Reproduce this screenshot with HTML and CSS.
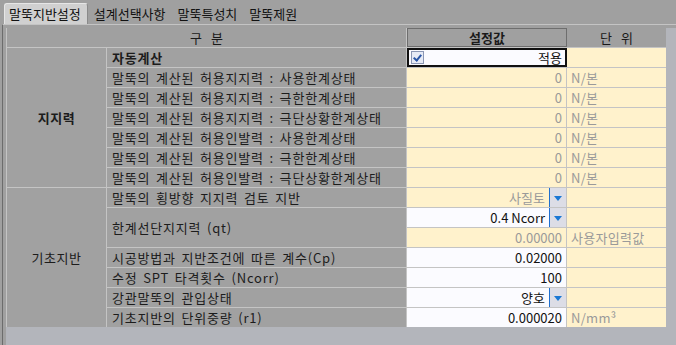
FILE: index.html
```html
<!DOCTYPE html>
<html>
<head>
    <meta charset="utf-8">
    <title>말뚝지반설정</title>
    <link rel="stylesheet" href="styles.css">
</head>
<body>
    <div class="tabs">
        <div class="tab active">말뚝지반설정</div>
        <div class="tab">설계선택사항</div>
        <div class="tab">말뚝특성치</div>
        <div class="tab">말뚝제원</div>
    </div>
    <div class="panel">
        <div class="sheet">
            <div class="grid">
                <div class="hd hd-name">구 분</div>
                <div class="hd hd-value">설정값</div>
                <div class="hd hd-unit">단 위</div>

                <div class="group bold span7">지지력</div>
                <div class="label bold">자동계산</div>
                <div class="val focus"><span class="check"></span><span>적용</span></div>
                <div class="unit"></div>

                <div class="label">말뚝의 계산된 허용지지력 : 사용한계상태</div>
                <div class="val dis">0</div>
                <div class="unit">N/본</div>
                <div class="label">말뚝의 계산된 허용지지력 : 극한한계상태</div>
                <div class="val dis">0</div>
                <div class="unit">N/본</div>
                <div class="label">말뚝의 계산된 허용지지력 : 극단상황한계상태</div>
                <div class="val dis">0</div>
                <div class="unit">N/본</div>
                <div class="label">말뚝의 계산된 허용인발력 : 사용한계상태</div>
                <div class="val dis">0</div>
                <div class="unit">N/본</div>
                <div class="label">말뚝의 계산된 허용인발력 : 극한한계상태</div>
                <div class="val dis">0</div>
                <div class="unit">N/본</div>
                <div class="label">말뚝의 계산된 허용인발력 : 극단상황한계상태</div>
                <div class="val dis">0</div>
                <div class="unit">N/본</div>

                <div class="group span7">기초지반</div>
                <div class="label">말뚝의 횡방향 지지력 검토 지반</div>
                <div class="val dis combo"><span>사질토</span><span class="drop"></span></div>
                <div class="unit"></div>
                <div class="label span2">한계선단지지력 (qt)</div>
                <div class="val combo"><span>0.4 Ncorr</span><span class="drop"></span></div>
                <div class="unit"></div>
                <div class="val dis">0.00000</div>
                <div class="unit">사용자입력값</div>
                <div class="label">시공방법과 지반조건에 따른 계수(Cp)</div>
                <div class="val">0.02000</div>
                <div class="unit"></div>
                <div class="label">수정 SPT 타격횟수 (Ncorr)</div>
                <div class="val">100</div>
                <div class="unit"></div>
                <div class="label">강관말뚝의 관입상태</div>
                <div class="val combo"><span>양호</span><span class="drop"></span></div>
                <div class="unit"></div>
                <div class="label">기초지반의 단위중량 (r1)</div>
                <div class="val">0.000020</div>
                <div class="unit">N/mm³</div>
            </div>
        </div>
    </div>
</body>
</html>
```

FILE: styles.css
```css
body {
    margin: 0;
    background-color: #a0a0a0;
    font-family: "Noto Sans CJK KR", "Noto Sans", sans-serif;
    font-size: 13px;
    color: #1c1c1c;
    width: 676px;
    height: 345px;
    overflow: hidden;
}

/* tab strip */
.tabs {
    display: flex;
    align-items: flex-end;
    height: 24px;
    padding-left: 4px;
    box-sizing: border-box;
}
.tab {
    height: 20px;
    line-height: 20px;
    padding: 0 6px;
    color: #111;
}
.tab.active {
    padding: 0 6px 0 4px;
    background-color: #d0d0d0;
    border: 1px solid #8a8a8a;
    border-bottom: none;
    border-top-color: #e6e6e6;
    border-left-color: #e6e6e6;
    border-radius: 3px 3px 0 0;
}

/* panel frame */
.panel {
    margin-left: 2px;
    border-left: 1px solid #6c6c6c;
    border-top: 1px solid #c4c4c4;
    padding-top: 3px;
    padding-left: 3px;
}
.sheet {
    background-color: #b3b5bb;
    height: 317px;
}

/* property grid */
.grid {
    display: grid;
    grid-template-columns: 99px 299px 159px 99px;
    grid-template-rows: repeat(15, 19px);
    gap: 1px;
    width: 659px;
    background-color: #c4c4c4;
    border-left: 1px solid #c4c4c4;
}
.grid > div {
    display: flex;
    align-items: center;
    white-space: nowrap;
    overflow: hidden;
}
.hd {
    background-color: #a0a0a0;
    justify-content: center;
    color: #1a1a1a;
}
.hd-name {
    grid-column: span 2;
    word-spacing: 6px;
}
.hd-value {
    font-weight: bold;
    border: 1px solid #6e6e6e;
    margin-right: -1px;
}
.hd-unit {
    word-spacing: 6px;
}
.group {
    background-color: #a1a1a1;
    justify-content: center;
    letter-spacing: 0.5px;
}
.span7 {
    grid-row: span 7;
}
.span2 {
    grid-row: span 2;
}
.bold {
    font-weight: bold;
}
.label {
    background-color: #a1a1a1;
    padding-left: 5px;
    letter-spacing: 0.8px;
    word-spacing: 2px;
}
.val {
    background-color: #fbfbff;
    justify-content: flex-end;
    padding-right: 4px;
    color: #111;
}
.val.dis {
    background-color: #fff2cc;
    color: #9a9a9a;
}
.val.focus {
    justify-content: space-between;
    border: 2px solid #111;
    padding: 0 3px 0 2px;
    margin-right: -1px;
}
.val.combo {
    padding-right: 0;
}
.unit {
    background-color: #fff2cc;
    color: #9a9a9a;
    padding-left: 4px;
    letter-spacing: 0.3px;
}

/* checkbox */
.check {
    width: 11px;
    height: 11px;
    border: 1px solid #8b97b5;
    background-color: #e7ebf6;
    position: relative;
}
.check::after {
    content: "";
    position: absolute;
    left: 3px;
    top: 1px;
    width: 3px;
    height: 6px;
    border-right: 2px solid #2a56a6;
    border-bottom: 2px solid #2a56a6;
    transform: rotate(40deg);
}

/* dropdown button */
.drop {
    width: 16px;
    height: 19px;
    margin-left: 4px;
    background-color: #dcdde6;
    border-left: 1px solid #1e6fd0;
    display: flex;
    align-items: center;
    justify-content: center;
}
.drop::after {
    content: "";
    border-left: 4px solid transparent;
    border-right: 4px solid transparent;
    border-top: 5px solid #1a78d4;
    margin-top: 1px;
}
```
